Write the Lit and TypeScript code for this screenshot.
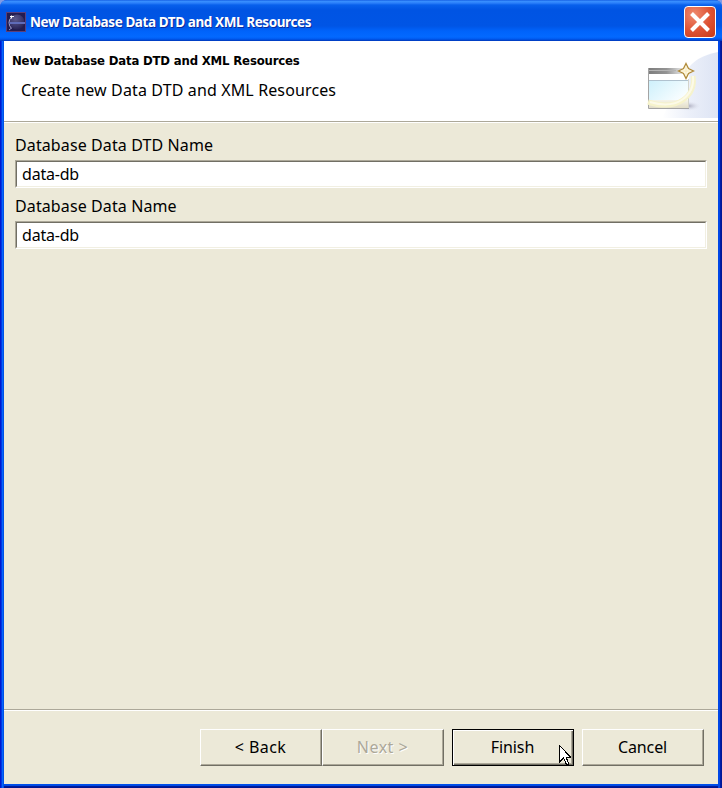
import { LitElement, html, css, svg } from "lit";
import { customElement, property } from "lit/decorators.js";

const eclipseIcon = svg`
  <svg viewBox="0 0 20 20" width="20" height="20">
    <defs>
      <radialGradient id="orb" cx="0.4" cy="0.3" r="0.8">
        <stop offset="0" stop-color="#5c5a8c" /><stop offset="0.6" stop-color="#39356a" /><stop offset="1" stop-color="#211b4a" />
      </radialGradient>
    </defs>
    <rect x="0.5" y="0.5" width="19" height="19" fill="#231c50" stroke="#5c3f78" />
    <circle cx="11" cy="10" r="7.500" fill="url(#orb)" />
    <path d="M5.500 5Q3 7.500 3 10.500Q3 14 5.500 16.500" fill="none" stroke="#a9a9d0" stroke-width="1" />
    <path d="M3 11H19" stroke="#5f6bb8" stroke-width="2" />
    <path d="M4 4.500h4M5.500 3.500v3" stroke="#fff" stroke-width="1.200" />
    <path d="M3 18l2.500-2" stroke="#8c8cc4" />
  </svg>`;

const bannerArt = svg`
  <svg viewBox="0 0 90 70" width="90" height="70">
    <defs>
      <linearGradient id="sky" x1="0" y1="0" x2="1" y2="0">
        <stop offset="0" stop-color="#fff" /><stop offset="0.5" stop-color="#ebeff9" /><stop offset="1" stop-color="#dde4f4" />
      </linearGradient>
      <linearGradient id="bar" x1="0" y1="0" x2="1" y2="0">
        <stop offset="0" stop-color="#7c7c7c" /><stop offset="0.55" stop-color="#949494" /><stop offset="1" stop-color="#e4e4e4" />
      </linearGradient>
      <linearGradient id="pane" x1="0" y1="0" x2="1" y2="0.6">
        <stop offset="0" stop-color="#cdf0fb" /><stop offset="1" stop-color="#f8fdff" />
      </linearGradient>
      <linearGradient id="base" x1="0" y1="0" x2="0" y2="1">
        <stop offset="0" stop-color="#f6f4e8" /><stop offset="1" stop-color="#e2ddc8" />
      </linearGradient>
      <radialGradient id="shade"><stop offset="0" stop-color="#a5a5b8" /><stop offset="1" stop-color="#e6eaf5" stop-opacity="0" /></radialGradient>
    </defs>
    <path d="M90 4Q68 8 59 22L34 70H90Z" fill="url(#sky)" />
    <ellipse cx="60" cy="58" rx="13" ry="5" fill="url(#shade)" />
    <rect x="20" y="20" width="41" height="40" fill="#fff" />
    <rect x="20" y="20" width="34" height="6" fill="url(#bar)" />
    <path d="M20 22.500H48" stroke="#b4b4b4" />
    <rect x="21" y="32" width="39" height="20" fill="url(#pane)" />
    <path d="M21 32.500H60" stroke="#b0c2cf" />
    <rect x="21" y="52" width="39" height="8" fill="url(#base)" />
    <path d="M20.500 20V60.500H61" fill="none" stroke="#a4a4a4" />
    <path d="M60.500 31V60" stroke="#d4d4cc" />
    <path d="M65 28Q67.500 43 55 52Q42 61 20 54" fill="none" stroke="#f6f3cc" stroke-width="5" />
    <path d="M65 28Q66.500 43 54.500 51.500Q42 60 22 54" fill="none" stroke="#fcfae8" stroke-width="2" />
    <path d="M58 15.500L60.500 20.500L65.500 23L60.500 25.500L58 30.500L55.500 25.500L50.500 23L55.500 20.500Z" fill="#fffbe8" stroke="#b08a38" stroke-width="1.300" />
    <path d="M58 19V27M54 23H62" stroke="#f7e8ba" />
  </svg>`;

const pointer = svg`
  <svg viewBox="0 0 12 21" width="12" height="21" shape-rendering="crispEdges">
    <path d="M0.500 0.500V17L4.500 13.200L7.500 19.500H9.500V18L7.200 12.500H12Z" fill="#fff" stroke="#000" />
  </svg>`;

@customElement("title-bar")
class TitleBar extends LitElement {
  static styles = css`
    :host { display: flex; align-items: center; height: 41px; box-sizing: border-box; padding: 3px 6px 0 6px;
      background: linear-gradient(#0a50dc 0, #3b92ff 1px, #2c80fa 3px, #0860ec 5px, #0054e3 10px, #0055e5 26px, #0063fb 31px, #0369ff 37px, #005af0 39px, #0037b8 41px);
      border-radius: 7px 7px 0 0; }
    .icon { display: flex; margin-right: 4px; }
    .text { flex: 1; color: #fff; font: bold 13.5px/20px "Noto Sans", sans-serif; white-space: nowrap; text-shadow: 1px 1px #0a2c9c; letter-spacing: -0.41px; }
    .close { display: flex; width: 32px; height: 32px; box-sizing: border-box; border: 1.500px solid #fff; border-radius: 4px; align-items: center; justify-content: center;
      background: radial-gradient(circle at 30% 25%, #ef8b70, #dd5132 55%, #c63a17); padding: 0; }
  `;
  @property() heading = "";
  render() {
    return html`<span class="icon">${eclipseIcon}</span><span class="text">${this.heading}</span>
      <button class="close" aria-label="Close"><svg width="22" height="22" viewBox="0 0 22 22"><path d="M2.500 2.500L19.500 19.500M19.500 2.500L2.500 19.500" stroke="#fff" stroke-width="4" /></svg></button>`;
  }
}

@customElement("text-field")
class TextField extends LitElement {
  static styles = css`
    :host { display: block; font: 16px/20px "Noto Sans", sans-serif; }
    .label { height: 20px; letter-spacing: 0.11px; }
    .box { height: 28px; box-sizing: border-box; margin-top: 5px; border: 1px solid; border-color: #aca899 #fff #fff #aca899; }
    .inner { height: 26px; box-sizing: border-box; border: 1px solid; border-color: #716f64 #f1efe2 #f1efe2 #716f64; background: #fff; padding: 2px 5px; letter-spacing: -0.2px; }
  `;
  @property() label = "";
  @property() value = "";
  render() {
    return html`<div class="label">${this.label}</div><div class="box"><div class="inner">${this.value}</div></div>`;
  }
}

@customElement("push-button")
class PushButton extends LitElement {
  static styles = css`
    :host { display: block; width: 122px; height: 37px; }
    .face { display: block; width: 100%; height: 100%; box-sizing: border-box; padding: 0 1px 1px 0; background: #ece9d8; color: #000;
      font: 16px/20px "Noto Sans", sans-serif; letter-spacing: -0.1px;
      border: 1px solid; border-color: #fff #716f64 #716f64 #fff; box-shadow: inset -1px -1px #aca899; }
    .primary { border-color: #000; box-shadow: inset 1px 1px #fff, inset -1px -1px #716f64, inset -2px -2px #aca899; }
    .step { letter-spacing: 0.4px; }
    .disabled { color: #aca899; text-shadow: 1px 1px #fff; letter-spacing: 0.5px; }
  `;
  @property() label = "";
  @property() kind = "";
  render() {
    return html`<button class="face ${this.kind}">${this.label}</button>`;
  }
}

@customElement("app-root")
class AppRoot extends LitElement {
  static styles = css`
    :host { display: block; width: 722px; height: 788px; background: #7f9be6; color: #000; overflow: hidden; }
    .window { height: 788px; display: flex; flex-direction: column; border-radius: 7px 7px 0 0; background: #0a41dc; }
    .body { flex: 1; display: flex; flex-direction: column; padding: 0 4px 4px;
      background: linear-gradient(90deg, #0019cf 0, #0019cf 1px, #0038e4 1px, #0038e4 2px, #0565fb 2px, #0565fb 3px, #0051e6 3px, #0051e6 4px, transparent 4px, transparent 718px, #0046e6 718px, #0046e6 720px, #0020b0 720px, #00138c 722px), linear-gradient(transparent 743px, #0052ee 743px, #0046e0 745px, #001da0 745px, #00138c 747px); }
    .banner { display: flex; justify-content: space-between; height: 80px; background: #fff; border-bottom: 1px solid #aca899; }
    .copy { padding: 10px 0 0 8px; white-space: nowrap; }
    .heading { font: bold 13px/20px "DejaVu Sans Condensed", "DejaVu Sans", sans-serif; font-stretch: condensed; letter-spacing: -0.17px; }
    .note { padding: 9px 0 0 9px; font: 16px/20px "Noto Sans", sans-serif; letter-spacing: 0.13px; }
    .art { display: flex; padding-top: 7px; }
    .form { flex: 1; display: flex; flex-direction: column; gap: 8px; padding: 12px 11px 0; background: #ece9d8; border-top: 1px solid #fff; border-bottom: 1px solid #aca899; }
    .actions { display: flex; justify-content: flex-end; height: 55px; padding: 18px 14px 0; background: #ece9d8; border-top: 1px solid #fff; }
    .default { position: relative; margin: 0 8px; }
    .pointer { position: absolute; left: 107px; top: 16px; display: flex; }
  `;
  render() {
    return html`<div class="window">
      <title-bar heading="New Database Data DTD and XML Resources"></title-bar>
      <div class="body">
        <div class="banner">
          <div class="copy">
            <div class="heading">New Database Data DTD and XML Resources</div>
            <div class="note">Create new Data DTD and XML Resources</div>
          </div>
          <div class="art">${bannerArt}</div>
        </div>
        <div class="form">
          <text-field label="Database Data DTD Name" value="data-db"></text-field>
          <text-field label="Database Data Name" value="data-db"></text-field>
        </div>
        <div class="actions">
          <push-button label="&lt; Back" kind="step"></push-button>
          <push-button label="Next &gt;" kind="disabled"></push-button>
          <div class="default">
            <push-button label="Finish" kind="primary"></push-button>
            <span class="pointer">${pointer}</span>
          </div>
          <push-button label="Cancel"></push-button>
        </div>
      </div>
    </div>`;
  }
}
